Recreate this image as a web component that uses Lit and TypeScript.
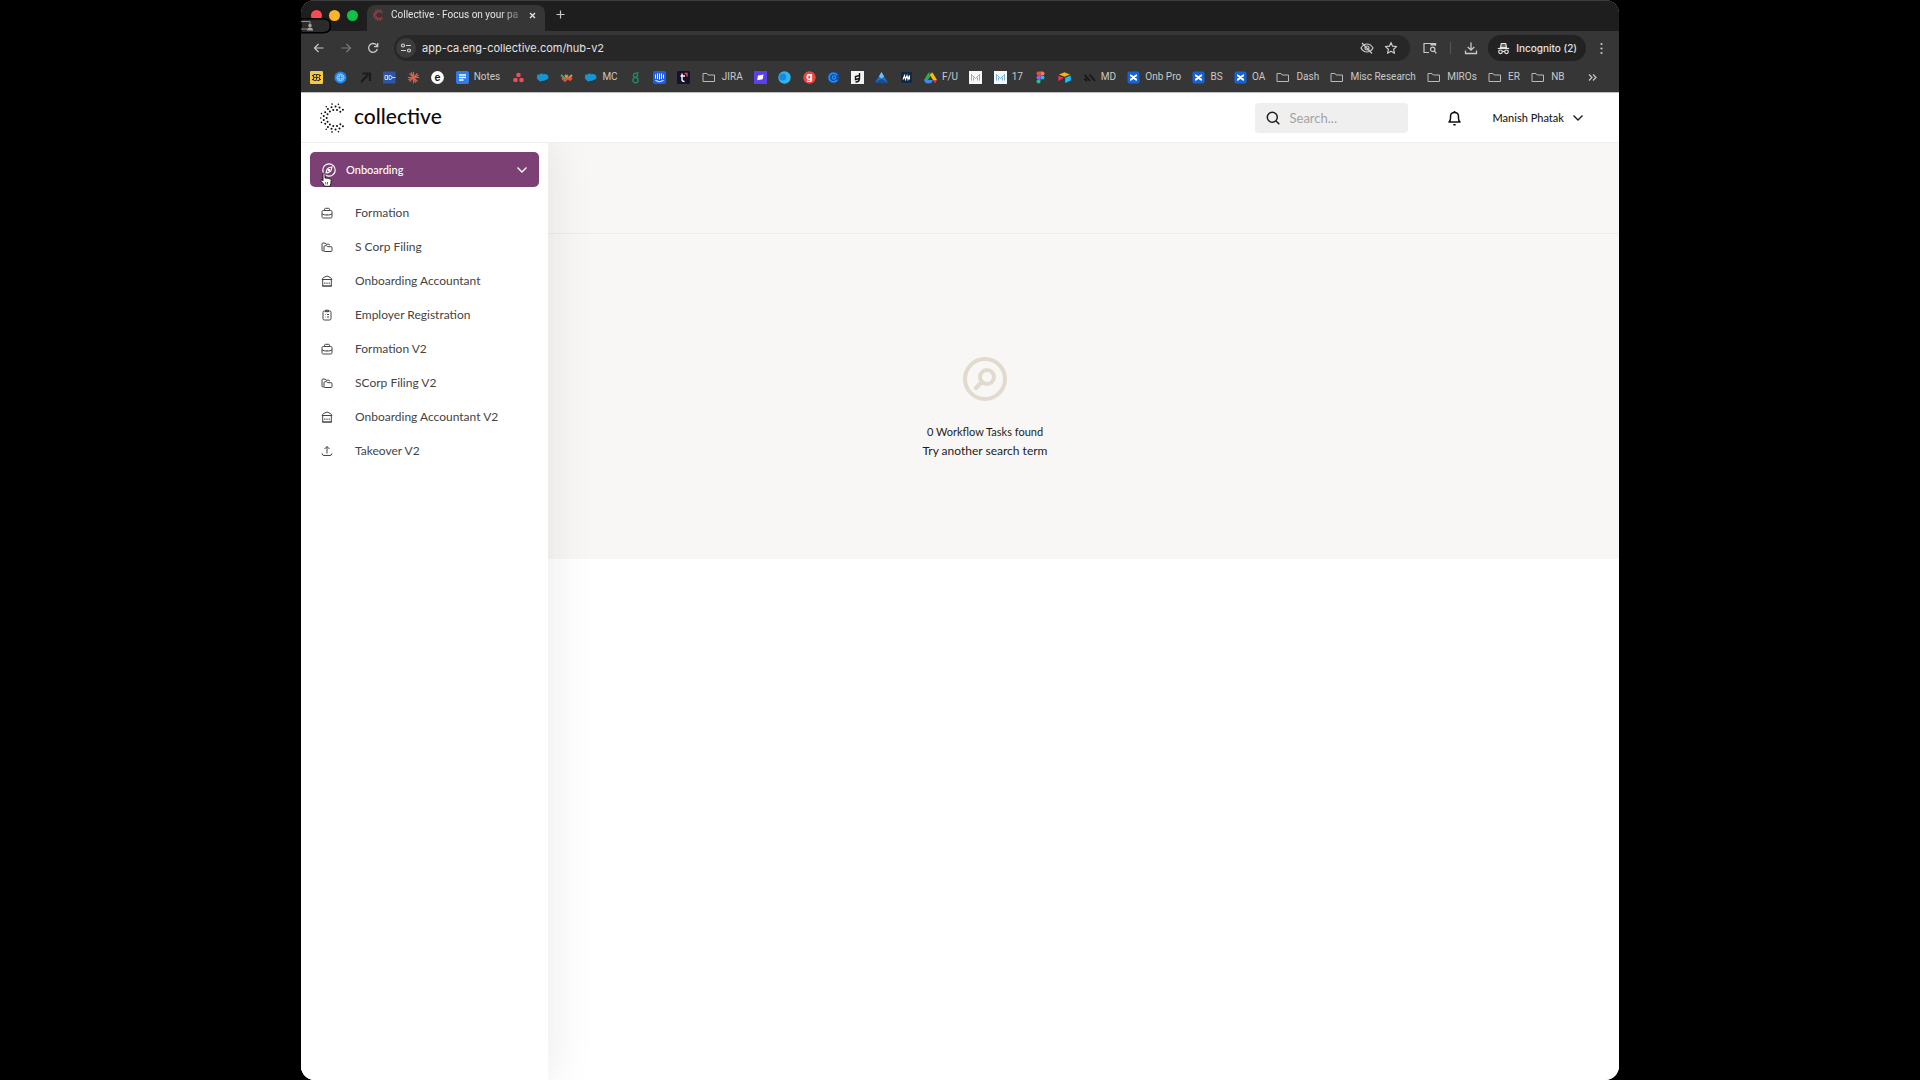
import { LitElement, html, css, svg, nothing } from "lit";
import type { SVGTemplateResult } from "lit";
import { customElement } from "lit/decorators.js";
import { classMap } from "lit/directives/class-map.js";

/* ---------- bookmark glyphs, drawn on a 13 x 13 grid ---------- */
const folder = svg`<path d="M1 2.500h4l1.200 1.500H12.500v6.500H1z" fill="none" stroke="#b9b9b9" stroke-linejoin="round"/>`;
const cloud = svg`<path d="M1 5.5C1 3.8 2.5 3 4 3.4 5 2.3 6.8 2.4 7.5 3.4 9 2.6 12.5 3.5 12.5 6c0 2-1.5 3-3 2.8C8.5 10.2 7 10 6.2 9.8 4.8 11 2.8 10.3 2.6 9 1.2 8.8.6 6.8 1 5.5z" fill="#1496d6"/>`;
const cross = svg`<rect x="0.5" y="0.5" width="12" height="12" rx="2" fill="#1464d8"/><path d="M3 4.2c2.500 0 4.500 4.600 7 4.600M10 4.200c-2.500 0-4.500 4.600-7 4.600" stroke="#fff" stroke-width="2" fill="none"/>`;
const metrics = svg`<rect width="13" height="13" fill="#f4f8fa"/><path d="M2.500 9.500v-6l4 4 4-4v6M4.500 9.500v-3M8.500 9.500v-3" stroke="#7fb6d6" fill="none"/>`;

const glyphs: Record<string, SVGTemplateResult> = {
  folder,
  cloud,
  cross,
  metrics,
  grid: svg`<rect width="13" height="13" rx="1" fill="#f7c948"/><path d="M3.500 3.500h6v6h-6zM3.500 6.500h6M6.500 3.500v6M2 4.500h1.500M2 8.500h1.500M9.500 4.500H11M9.500 8.500H11" stroke="#2b2412" stroke-width="1.200" fill="none" stroke-dasharray="2.200 .8"/>`,
  atom: svg`<circle cx="6.500" cy="6.500" r="6" fill="#1a86f0"/><g fill="none" stroke="#9fd0ff" stroke-width=".8"><circle cx="6.500" cy="6.500" r="3.500"/><ellipse cx="6.500" cy="6.500" rx="3.500" ry="1.500"/><ellipse cx="6.500" cy="6.500" rx="1.500" ry="3.500"/></g>`,
  arrow: svg`<path d="M2 11l7-7M3.500 2.500h7.500v7.500" stroke="#1b1b1b" stroke-width="2.200" fill="none"/>`,
  plug: svg`<rect y="0.500" width="12.500" height="12" fill="#2d55a5"/><path d="M2 4.500h2.500v4H2zM6 4.500h1q2 0 2 2t-2 2H6zM9 6.500h3.500" stroke="#c9d8f2" fill="none"/>`,
  burst: svg`<path d="M6.500.8v11.400M.8 6.500h11.400M2.500 2.500l8 8M10.500 2.500l-8 8M4.200 1.300l4.600 10.400M1.300 8.800l10.400-4.600" stroke="#d9634a" stroke-width="1.100"/>`,
  e: svg`<circle cx="6.500" cy="6.500" r="6.400" fill="#fff"/><text x="6.500" y="9.500" text-anchor="middle" font-family="Inter, sans-serif" font-size="10" font-weight="700" fill="#1b1b1b">e</text>`,
  doc: svg`<rect width="13" height="13" rx="2" fill="#2f7ded"/><path d="M3 4h7M3 6.500h7M3 9h4.500" stroke="#fff" stroke-width="1.300"/>`,
  trio: svg`<g fill="#e8505b"><circle cx="6.500" cy="4" r="2.300"/><circle cx="3.500" cy="9" r="2.300"/><circle cx="9.500" cy="9" r="2.300"/></g>`,
  weave: svg`<path d="M1 4l3.500 3.500L8 4" stroke="#35b36b" stroke-width="1.800" fill="none"/><path d="M5 4l3.500 3.500L12 4" stroke="#f0913a" stroke-width="1.800" fill="none"/><path d="M2 7l3 3 3-3 2 2 2-2" stroke="#e5533d" stroke-width="1.800" fill="none"/>`,
  eight: svg`<g fill="none" stroke="#1f8f5f" stroke-width="1.300"><circle cx="6.500" cy="4.200" r="2"/><circle cx="6.500" cy="9.300" r="2.600"/><path d="M8 2.500L9.500 1"/></g>`,
  bars: svg`<rect width="13" height="13" rx="2" fill="#1f5fe0"/><path d="M2.500 3.500v4M4.500 2.500v5.500M6.500 2.500v6M8.500 2.500v5.500M10.500 3.500v4M2.500 9.500q4 2.500 8 0" stroke="#fff" fill="none"/>`,
  tee: svg`<rect width="13" height="13" rx="1.500" fill="#170f2b"/><path d="M5 2.500v6q0 2 2.500 2M3.500 5H8" stroke="#fff" stroke-width="1.400" fill="none"/><path d="M7.500 2.500h2.500v3" stroke="#f04a3e" stroke-width="1.400" fill="none"/>`,
  violet: svg`<rect width="13" height="13" fill="#5b3fe8"/><path d="M4 4.500l5.500-1-.8 4.700-5.500 1z" fill="#fff"/>`,
  globe: svg`<circle cx="6.500" cy="6.500" r="6.200" fill="#2db4f2"/><circle cx="4.800" cy="6" r="3.500" fill="#1689dc"/>`,
  g: svg`<circle cx="6.500" cy="6.500" r="6.200" fill="#e8473f"/><text x="6.500" y="9" text-anchor="middle" font-family="Inter, sans-serif" font-size="10" font-weight="700" fill="#fff">g</text>`,
  sync: svg`<circle cx="6.500" cy="6.500" r="6" fill="#0f4f9e"/><path d="M10 4A4.300 4.300 0 1 0 10 9" stroke="#2f8cf5" stroke-width="1.500" fill="none"/><circle cx="7" cy="6.500" r="1.700" stroke="#2f8cf5" stroke-width="1.200" fill="none"/>`,
  paper: svg`<rect width="13" height="13" fill="#f2f2f2"/><path d="M8.500 2v5.500q0 3.500-4 3.500M8.500 4.500l-4 1v3l4-1" stroke="#161616" stroke-width="1.400" fill="none"/>`,
  peak: svg`<path d="M6.500 1L12.800 11.500H.2z" fill="#1d6fc4"/><path d="M6.500 1l2.600 4.500-2.600 2-2.600-2z" fill="#6ec1f7"/><path d="M.2 11.500L6.500 8l6.300 3.500z" fill="#174a9e"/>`,
  wave: svg`<rect x="1" y="1" width="11" height="11" rx="1" fill="#0f2942"/><path d="M3 8.500l1.500-4 1 4 1.500-4 1 4 1.500-4v4" stroke="#fff" stroke-width="1.100" fill="none"/>`,
  drive: svg`<path d="M4.500 1.500h4L6.500 5z" fill="#188038"/><path d="M4.500 1.500L0 9l2 3.200L6.500 5z" fill="#34a853"/><path d="M8.500 1.500L13 9H9L5.800 3.800z" fill="#fbbc04"/><path d="M0 9h9l-1.800 3.200H2z" fill="#4285f4"/><path d="M9 9h4l-2 3.200z" fill="#ea4335"/>`,
  petals: svg`<path d="M6.500.5H4.500a2 2 0 0 0 0 4h2z" fill="#f24e1e"/><path d="M6.500.5h2a2 2 0 0 1 0 4h-2z" fill="#ff7262"/><path d="M6.500 4.500h-2a2 2 0 0 0 0 4h2z" fill="#a259ff"/><circle cx="8.500" cy="6.500" r="2" fill="#1abcfe"/><path d="M6.500 8.500h-2a2 2 0 1 0 2 2z" fill="#0acf83"/>`,
  box: svg`<path d="M1 3.500L6.500 1.200 12 3.500 6.500 5.700z" fill="#fcb400"/><path d="M7.200 6.800L12.800 4.600v5L7.200 12z" fill="#18bfff"/><path d="M.3 4.800L5.800 7 .3 10z" fill="#f82b60"/>`,
  stripes: svg`<path d="M1.500 3.500l5.500 6.500M6.500 3.500L12 10M1.500 7.500L4 10" stroke="#161616" stroke-width="1.800" fill="none"/>`,
};

const bookmarks: { icon: string; label?: string }[] = [
  { icon: "grid" },
  { icon: "atom" },
  { icon: "arrow" },
  { icon: "plug" },
  { icon: "burst" },
  { icon: "e" },
  { icon: "doc", label: "Notes" },
  { icon: "trio" },
  { icon: "cloud" },
  { icon: "weave" },
  { icon: "cloud", label: "MC" },
  { icon: "eight" },
  { icon: "bars" },
  { icon: "tee" },
  { icon: "folder", label: "JIRA" },
  { icon: "violet" },
  { icon: "globe" },
  { icon: "g" },
  { icon: "sync" },
  { icon: "paper" },
  { icon: "peak" },
  { icon: "wave" },
  { icon: "drive", label: "F/U" },
  { icon: "metrics" },
  { icon: "metrics", label: "17" },
  { icon: "petals" },
  { icon: "box" },
  { icon: "stripes", label: "MD" },
  { icon: "cross", label: "Onb Pro" },
  { icon: "cross", label: "BS" },
  { icon: "cross", label: "OA" },
  { icon: "folder", label: "Dash" },
  { icon: "folder", label: "Misc Research" },
  { icon: "folder", label: "MIROs" },
  { icon: "folder", label: "ER" },
  { icon: "folder", label: "NB" },
];

/* ---------- dotted "C" mark: concentric rings, open to the right ---------- */
function dottedMark(color: string, weight = 1) {
  const dots: SVGTemplateResult[] = [];
  const ring = (r: number, from: number, to: number, count: number, size: number) => {
    for (let i = 0; i < count; i++) {
      const a = ((from + ((to - from) * i) / (count - 1)) * Math.PI) / 180;
      dots.push(svg`<circle cx=${(15 + r * Math.cos(a)).toFixed(2)} cy=${(15 - r * Math.sin(a)).toFixed(2)} r=${size * weight} fill=${color} />`);
    }
  };
  ring(8.3, 50, 310, 11, 1);
  ring(11.4, 46, 314, 14, 1);
  ring(14.2, 76, 128, 3, 0.8);
  ring(14.2, 162, 198, 3, 0.8);
  ring(14.2, 232, 284, 3, 0.8);
  return dots;
}

/* ---------- sidebar icons, drawn on a 12 x 12 grid ---------- */
const navIcons: Record<string, SVGTemplateResult> = {
  briefcase: svg`<rect x="1" y="3.500" width="10" height="7.500" rx="1.300"/><path d="M3.500 3.500V2.300Q3.500 1.300 4.500 1.300h3q1 0 1 1v1.200M1 7q2.200 1 3.800 1h2.400q1.600 0 3.800-1M6 7v1"/>`,
  folders: svg`<path d="M2.700 10H2q-1 0-1-1V3q0-1 1-1h2l1 1.200h2.700q1 0 1 1"/><path d="M3 9.500V5.700q0-1 1-1h1.700l1 1H10q1 0 1 1v2.800q0 1-1 1H4q-1 0-1-1z"/>`,
  bank: svg`<path d="M1 4.500L2.500 2.500 6 1l3.500 1.500L11 4.500zM1.700 4.500V11h8.600V4.500M1 11h10"/><path d="M3.800 7.500v1.500M6 7.500v1.500M8.200 7.500v1.500"/>`,
  clipboard: svg`<rect x="2" y="2" width="8" height="9" rx="1.300"/><path d="M4.500 2.700V1.200h3v1.500zM4 5.500h.5M6 5.500h2M4 8h.5M6 8h2"/>`,
  upload: svg`<path d="M6 8.500V1.500M3.500 4L6 1.500 8.500 4M1 8.500q.3 2 2 2h6q1.700 0 2-2"/>`,
};

const navItems = [
  { icon: "briefcase", label: "Formation" },
  { icon: "folders", label: "S Corp Filing" },
  { icon: "bank", label: "Onboarding Accountant" },
  { icon: "clipboard", label: "Employer Registration" },
  { icon: "briefcase", label: "Formation V2" },
  { icon: "folders", label: "SCorp Filing V2" },
  { icon: "bank", label: "Onboarding Accountant V2" },
  { icon: "upload", label: "Takeover V2" },
];

const chevron = html`<svg width="12" height="12" viewBox="0 0 12 12" fill="none" stroke="currentColor" stroke-width="1.400" aria-hidden="true"><path d="M1.500 3.500L6 8l4.500-4.500"/></svg>`;

@customElement("browser-chrome")
export class BrowserChrome extends LitElement {
  static styles = css`
    :host { display: block; background: #363636; color: #e4e4e4; font: 10px/16px Roboto, "Liberation Sans", sans-serif; }
    svg { display: block; flex: none; overflow: visible; }
    button { border: 0; padding: 0; background: none; color: inherit; font: inherit; display: flex; align-items: center; }
    a { color: inherit; text-decoration: none; }
    .strip { display: flex; align-items: flex-end; height: 31px; background: #1e1e1e; padding-left: 10px; border-top: 1px solid #3c3c3c; box-sizing: border-box; }
    .lights { display: flex; gap: 7px; align-self: center; width: 56px; margin-bottom: 2px; }
    .light { width: 11px; height: 11px; border-radius: 50%; }
    .red { background: #fb4a52; }
    .amber { background: #fcb42c; }
    .green { background: #0fc14a; }
    .tab { display: flex; align-items: center; width: 178px; height: 26px; box-sizing: border-box; padding: 0 8px 6px 6px; border-radius: 8px 8px 0 0; background: #363636; }
    .title { flex: 1; margin-left: 6px; white-space: nowrap; mask-image: linear-gradient(90deg, #000 80%, transparent); }
    .plus { margin: 0 0 11px 10px; }
    .toolbar { display: flex; align-items: center; height: 34px; padding: 0 11px; color: #c9c9c9; }
    .history { display: flex; align-items: center; gap: 13px; width: 82px; }
    .dim { color: #7a7a7a; }
    .address { flex: 1; display: flex; align-items: center; gap: 10px; height: 26px; border-radius: 13px; background: #272727; padding: 0 12px 0 2px; }
    .site { width: 20px; height: 20px; border-radius: 50%; background: #3b3b3b; justify-content: center; }
    .url { flex: 1; min-width: 0; border: 0; padding: 0; margin-left: -4px; background: none; color: #e4e4e4; font: 11px/16px Inter, "Liberation Sans", sans-serif; outline: 0; }
    .tools { display: flex; align-items: center; }
    .reader { margin-left: 13px; }
    .divider { width: 1px; height: 12px; background: #555; margin: 0 13px; }
    .incognito { height: 26px; border-radius: 13px; background: #222; color: #e4e4e4; font: 500 10px/16px Inter, "Liberation Sans", sans-serif; gap: 6px; padding: 0 9px; margin: 0 9px 0 10px; white-space: nowrap; }
    .bookmarks { display: flex; align-items: center; justify-content: space-between; height: 24px; padding: 0 22px 3px 9px; color: #c9c9c9; }
    .bookmark { display: flex; align-items: center; gap: 5px; white-space: nowrap; }
    .is-folder { gap: 7px; }
    .more { padding-left: 12px; }
  `;

  render() {
    return html`
      <div class="strip">
        <div class="lights"><span class="light red"></span><span class="light amber"></span><span class="light green"></span></div>
        <div class="tab">
          <svg width="12" height="12" viewBox="0 0 30 30" aria-hidden="true">${dottedMark("#dc3f57", 1.4)}</svg>
          <span class="title">Collective - Focus on your pa</span>
          <button aria-label="Close tab"><svg width="9" height="9" viewBox="0 0 9 9" stroke="currentColor" stroke-width="1.300"><path d="M2 2l5 5M7 2L2 7"/></svg></button>
        </div>
        <button class="plus" aria-label="New tab"><svg width="11" height="11" viewBox="0 0 11 11" stroke="#c9c9c9" stroke-width="1.200"><path d="M5.500 1.500v8M1.500 5.500h8"/></svg></button>
      </div>
      <div class="toolbar">
        <div class="history">
          <button aria-label="Back"><svg width="14" height="14" viewBox="0 0 14 14" fill="none" stroke="currentColor" stroke-width="1.200"><path d="M11.500 7h-9M6.500 3l-4 4 4 4"/></svg></button>
          <button class="dim" aria-label="Forward"><svg width="14" height="14" viewBox="0 0 14 14" fill="none" stroke="currentColor" stroke-width="1.200"><path d="M2.500 7h9M7.500 3l4 4-4 4"/></svg></button>
          <button aria-label="Reload"><svg width="14" height="14" viewBox="0 0 14 14" fill="none" stroke="currentColor" stroke-width="1.300"><path d="M11.300 8A4.400 4.400 0 1 1 10.500 4.200L11.500 5.500M11.700 2v3.700H8"/></svg></button>
        </div>
        <div class="address">
          <button class="site" aria-label="Site information"><svg width="12" height="12" viewBox="0 0 12 12" fill="none" stroke="#d0d0d0" stroke-width="1.200"><circle cx="3" cy="3.500" r="1.500"/><path d="M6 3.500h5M1 8.500h5"/><circle cx="9" cy="8.500" r="1.500"/></svg></button>
          <input class="url" aria-label="Address" value="app-ca.eng-collective.com/hub-v2" />
          <button aria-label="Tracking blocked"><svg width="14" height="14" viewBox="0 0 14 14" fill="none" stroke="currentColor" stroke-width="1.200"><path d="M1 7q2.300-4 6-4t6 4q-2.300 4-6 4T1 7z"/><circle cx="7" cy="7" r="2"/><path d="M2 2l10 10.500"/></svg></button>
          <button aria-label="Bookmark this page"><svg width="14" height="14" viewBox="0 0 14 14" fill="none" stroke="currentColor" stroke-width="1.200" stroke-linejoin="round"><path d="M7 1.500l1.600 3.700 4 .4-3 2.700.9 4L7 10.200l-3.500 2.100.9-4-3-2.700 4-.4z"/></svg></button>
        </div>
        <div class="tools">
          <button class="reader" aria-label="Search in side panel"><svg width="14" height="14" viewBox="0 0 14 14" fill="none" stroke="currentColor" stroke-width="1.200"><path d="M6 11.500H1v-9h11.500v2"/><path d="M8 2.500h4.500V4H8z" fill="currentColor"/><circle cx="9.700" cy="8.300" r="2.200"/><path d="M11.300 10l2 2.300"/></svg></button>
          <span class="divider"></span>
          <button aria-label="Downloads"><svg width="14" height="14" viewBox="0 0 14 14" fill="none" stroke="currentColor" stroke-width="1.300"><path d="M7 1.500v7.500M3.700 6L7 9.200 10.300 6M1.500 9.500v3h11v-3"/></svg></button>
          <button class="incognito"><svg width="13" height="13" viewBox="0 0 13 13" fill="none" stroke="currentColor" stroke-width="1.200"><path d="M3.500 5.500l.8-4h4.400l.8 4z" fill="currentColor" fill-opacity=".35"/><path d="M.8 6.500h11.400"/><circle cx="3.500" cy="9.800" r="1.800"/><circle cx="9.500" cy="9.800" r="1.800"/><path d="M5.300 9.500h2.400"/></svg>Incognito (2)</button>
          <button aria-label="Menu"><svg width="13" height="13" viewBox="0 0 13 13" fill="currentColor"><circle cx="6.500" cy="2" r="1.100"/><circle cx="6.500" cy="6.500" r="1.100"/><circle cx="6.500" cy="11" r="1.100"/></svg></button>
        </div>
      </div>
      <nav class="bookmarks" aria-label="Bookmarks">
        ${bookmarks.map(
          (b) => html`<a class=${classMap({ bookmark: true, "is-folder": b.icon === "folder" })} href="#" aria-label=${b.label ?? b.icon}><svg width="13" height="13" viewBox="0 0 13 13" aria-hidden="true">${glyphs[b.icon]}</svg>${b.label ? html`<span>${b.label}</span>` : nothing}</a>`
        )}
        <button class="more" aria-label="More bookmarks"><svg width="9" height="9" viewBox="0 0 9 9" fill="none" stroke="currentColor" stroke-width="1.200"><path d="M1 1.500l3 3-3 3M5 1.500l3 3-3 3"/></svg></button>
      </nav>
    `;
  }
}

@customElement("app-header")
export class AppHeader extends LitElement {
  static styles = css`
    :host { display: flex; align-items: center; height: 49px; padding: 0 35px 0 19px; background: #fff; border-bottom: 1px solid #efefee; }
    svg { display: block; flex: none; }
    button { border: 0; padding: 0; background: none; color: #1c1c1c; font: inherit; display: flex; align-items: center; }
    .brand { display: flex; align-items: center; gap: 4px; color: #0c0c0c; text-decoration: none; font: 500 21px/28px Lato, sans-serif; }
    .wordmark { padding-bottom: 3px; }
    .search { display: flex; align-items: center; gap: 10px; width: 153px; height: 30px; box-sizing: border-box; margin: 0 39px 0 auto; padding: 0 11px; border-radius: 4px; background: #efefef; }
    .query { flex: 1; min-width: 0; border: 0; padding: 0; background: none; outline: 0; font: 13px/20px Lato, sans-serif; color: #222; }
    .query::placeholder { color: #a3a3a3; opacity: 1; }
    .user { gap: 8px; margin-left: 31px; font: 500 11px/16px Lato, sans-serif; }
  `;

  render() {
    return html`
      <a class="brand" href="#"><svg width="30" height="30" viewBox="0 0 30 30" aria-hidden="true">${dottedMark("#0c0c0c")}</svg><span class="wordmark">collective</span></a>
      <label class="search">
        <svg width="14" height="14" viewBox="0 0 14 14" fill="none" stroke="#1c1c1c" stroke-width="1.500" aria-hidden="true"><circle cx="6.300" cy="6.300" r="5"/><path d="M10 10l3.300 3.300"/></svg>
        <input class="query" type="search" aria-label="Search" placeholder="Search..." />
      </label>
      <button aria-label="Notifications"><svg width="15" height="16" viewBox="0 0 15 16" fill="none" stroke="#111" stroke-width="1.500" stroke-linejoin="round"><path d="M2 12q1.500-1.500 1.500-3.500V6.500q0-4 4-4t4 4v2Q11.500 10.500 13 12z"/><path d="M6.300 14.700h2.400M7.500 1v1.500"/></svg></button>
      <button class="user">Manish Phatak ${chevron}</button>
    `;
  }
}

@customElement("side-menu")
export class SideMenu extends LitElement {
  static styles = css`
    :host { display: block; box-sizing: border-box; padding: 9px; background: #fff; font: 12px/20px Lato, sans-serif; color: #444; }
    svg { display: block; flex: none; }
    .group { display: flex; align-items: center; gap: 10px; width: 100%; height: 35px; box-sizing: border-box; border: 0; border-radius: 5px; padding: 0 11px 0 12px; margin-bottom: 9px; background: #7c4074; color: #fff; font: 500 11px/16px Lato, sans-serif; text-align: left; }
    .label { flex: 1; }
    .item { display: flex; align-items: center; gap: 22px; height: 34px; padding-left: 11px; color: inherit; text-decoration: none; white-space: nowrap; }
    .items { list-style: none; margin: 0; padding: 0; }
  `;

  render() {
    return html`
      <button class="group" aria-expanded="true">
        <svg width="14" height="14" viewBox="0 0 14 14" fill="none" stroke="currentColor" stroke-width="1.200" aria-hidden="true"><circle cx="7" cy="7" r="6.200"/><path d="M10 4L9 7.500Q8.300 9.300 4 10L5 6.500Q5.700 4.700 10 4z"/><circle cx="7" cy="7" r=".6"/></svg>
        <span class="label">Onboarding</span>${chevron}
      </button>
      <ul class="items">
        ${navItems.map(
          (n) => html`<li><a class="item" href="#"><svg width="12" height="12" viewBox="0 0 12 12" fill="none" stroke="currentColor" stroke-width="1" stroke-linejoin="round" aria-hidden="true">${navIcons[n.icon]}</svg><span>${n.label}</span></a></li>`
        )}
      </ul>
    `;
  }
}

@customElement("app-root")
export class AppRoot extends LitElement {
  static styles = css`
    :host { display: block; min-height: 100vh; background: #000; }
    .desktop { display: flex; min-height: 100vh; box-sizing: border-box; padding: 0 301px; }
    .window { flex: 1; min-width: 0; display: flex; flex-direction: column; position: relative; border-radius: 14px; overflow: hidden; background: #fff; }
    .page { flex: 1; display: flex; flex-direction: column; border-top: 1px solid #bdbdbd; }
    .body { flex: 1; position: relative; background: #fff; }
    .content { padding-left: 50px; background: #f8f7f5; }
    .filters { height: 91px; box-sizing: border-box; border-bottom: 1px solid #eeedec; }
    .empty { display: flex; flex-direction: column; align-items: center; box-sizing: border-box; min-height: 325px; padding-top: 123px; color: #1d1d1d; font: 12px/19px Lato, sans-serif; }
    .badge { display: block; margin-bottom: 21px; }
    .count { margin: 0; font-size: 11px; }
    .hint { margin: 0; }
    .menu { position: absolute; top: 0; bottom: 0; left: 0; width: 247px; box-shadow: 0 0 44px rgba(30, 30, 35, 0.1); clip-path: inset(0 -60px 0 0); }
    .pointer { position: absolute; left: 19px; top: 172px; }
    .share { position: absolute; left: 0; top: 18px; }
  `;

  render() {
    return html`
      <div class="desktop">
        <div class="window">
          <browser-chrome></browser-chrome>
          <div class="page">
            <app-header></app-header>
            <div class="body">
              <main class="content">
                <div class="filters"></div>
                <section class="empty">
                  <svg class="badge" width="44" height="44" viewBox="0 0 44 44" fill="none" stroke="#e0dbce" aria-hidden="true"><circle cx="22" cy="22" r="20" stroke-width="4"/><circle cx="24" cy="20" r="7" stroke-width="4"/><path d="M18.500 25.500L13 31" stroke-width="4.500" stroke-linecap="round"/></svg>
                  <p class="count">0 Workflow Tasks found</p>
                  <p class="hint">Try another search term</p>
                </section>
              </main>
              <side-menu class="menu"></side-menu>
            </div>
          </div>
          <svg class="share" width="31" height="16" viewBox="0 0 31 16" aria-hidden="true"><path d="M0 .8h22q7.500 0 7.500 7t-7.500 7H0z" fill="#2b2b2b" stroke="#000" stroke-width="1.500"/><path d="M0 3.500h9v5M0 11h6" fill="none" stroke="#8d8d8d"/><circle cx="9" cy="7.500" r="1.700" fill="#a5a5a5"/><path d="M6 12.500q0-3 3-3t3 3z" fill="#a5a5a5"/></svg>
          <svg class="pointer" width="12" height="16" viewBox="0 0 12 16" aria-hidden="true"><path d="M3 1.800q0-1 1-1t1 1V6q3.500 0 5.500 1 .7.400.7 1.500 0 3-1.200 5.800H4.500Q3.500 11.500 1 9.300q-.5-1 .5-1.300.800 0 1.500.8z" fill="#fff" stroke="#111" stroke-width=".9"/><path d="M5.700 10v2.500M7.500 10v2.500" stroke="#111" stroke-width=".6"/></svg>
        </div>
      </div>
    `;
  }
}
